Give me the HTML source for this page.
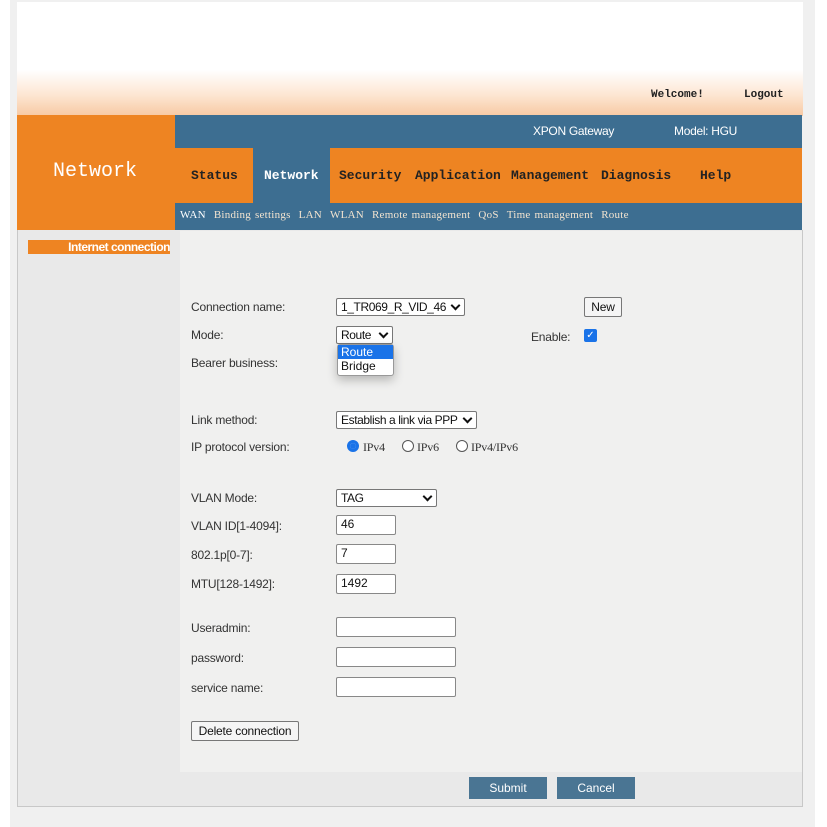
<!DOCTYPE html>
<html><head><style>
*{margin:0;padding:0;box-sizing:border-box}
body{width:827px;height:827px;background:#fff;position:relative;overflow:hidden;font-family:"Liberation Sans",sans-serif}
.a{position:absolute}
.mono{font-family:"Liberation Mono","DejaVu Sans Mono",monospace;font-weight:bold}
.lbl{position:absolute;left:191px;font-size:12px;color:#333;letter-spacing:-.2px}
.inp{position:absolute;background:#fff;border:1px solid #888;border-radius:2px;font-size:12px;color:#111;padding-left:4px;line-height:17px;height:20px}
.sel{position:absolute;background:#fff;border:1px solid #777;border-radius:2px;font-size:12px;color:#111;padding-left:4px;line-height:16px;height:18px;letter-spacing:-.4px;white-space:nowrap}
.sel:after{content:"";position:absolute;right:5px;top:3px;width:5px;height:5px;border-right:2px solid #111;border-bottom:2px solid #111;transform:rotate(45deg)}
.btn{position:absolute;background:#f5f5f5;border:1px solid #777;border-radius:2px;font-size:12px;color:#111;text-align:center;letter-spacing:-.2px}
.radio{position:absolute;width:12px;height:12px;border-radius:50%;border:1px solid #555;background:#fff}
</style></head><body>
<div class="a" style="left:10px;top:0;width:805px;height:827px;background:#f0f0f0"></div>
<div class="a" style="left:17px;top:2px;width:786px;height:114px;background:linear-gradient(#fff 0,#fff 68px,#fde6d2 93px,#f7c9a3 114px)"></div>
<div class="a mono" style="left:651px;top:89px;font-size:11px;color:#222">Welcome!</div>
<div class="a mono" style="left:744px;top:89px;font-size:11px;color:#222">Logout</div>
<div class="a" style="left:17px;top:115px;width:158px;height:115px;background:#ee8422"></div>
<div class="a" style="left:53px;top:160px;font-family:'Liberation Mono',monospace;font-size:20px;color:#fff">Network</div>
<div class="a" style="left:175px;top:115px;width:627px;height:33px;background:#3d6e91"></div>
<div class="a" style="left:533px;top:124px;font-size:12px;color:#fff;letter-spacing:-.3px">XPON Gateway</div>
<div class="a" style="left:674px;top:124px;font-size:12px;color:#fff;letter-spacing:-.3px">Model: HGU</div>
<div class="a" style="left:175px;top:148px;width:627px;height:55px;background:#ee8422"></div>
<div class="a" style="left:253px;top:148px;width:77px;height:55px;background:#3d6e91"></div>
<div class="a mono" style="top:168px;left:0;font-size:13px;color:#222;width:827px;height:20px">
<span class="a" style="left:191px">Status</span><span class="a" style="left:264px;color:#fff">Network</span><span class="a" style="left:339px">Security</span><span class="a" style="left:415px">Application</span><span class="a" style="left:511px">Management</span><span class="a" style="left:601px">Diagnosis</span><span class="a" style="left:700px">Help</span></div>
<div class="a" style="left:175px;top:203px;width:627px;height:27px;background:#3d6e91"></div>
<div class="a" style="left:180px;top:209px;font-family:'Liberation Serif',serif;font-size:11px;color:#fff;white-space:nowrap;letter-spacing:.25px;word-spacing:1px">WAN&nbsp; <span style="color:#f3e4d0">Binding settings &nbsp;LAN &nbsp;WLAN &nbsp;Remote management &nbsp;QoS &nbsp;Time management &nbsp;Route</span></div>
<div class="a" style="left:17px;top:230px;width:786px;height:577px;border:1px solid #c8c8c8;border-top:none;background:#e9e9e9"></div>
<div class="a" style="left:180px;top:231px;width:622px;height:541px;background:#f0f0ef"></div>
<div class="a" style="left:28px;top:240px;width:142px;height:14px;background:#ee8422;color:#fff;font-size:12px;font-weight:bold;text-align:right;line-height:14px;letter-spacing:-.5px;white-space:nowrap">Internet connection</div>

<div class="lbl" style="top:300px">Connection name:</div>
<div class="sel" style="left:336px;top:298px;width:129px">1_TR069_R_VID_46</div>
<div class="btn" style="left:584px;top:297px;width:38px;height:20px;line-height:18px">New</div>
<div class="lbl" style="top:328px">Mode:</div>
<div class="sel" style="left:336px;top:326px;width:57px">Route</div>
<div class="lbl" style="left:531px;top:330px">Enable:</div>
<div class="a" style="left:584px;top:329px;width:13px;height:13px;background:#1a73e8;border-radius:2px;color:#fff;font-size:10px;line-height:13px;text-align:center">✓</div>
<div class="lbl" style="top:356px">Bearer business:</div>
<div class="a" style="left:337px;top:344px;width:57px;height:32px;background:#fff;border:1px solid #999;border-radius:3px;box-shadow:0 4px 10px rgba(0,0,0,.25);font-size:12px;line-height:14px">
<div style="background:#1a73e8;color:#fff;padding-left:3px">Route</div><div style="padding-left:3px;color:#111">Bridge</div></div>
<div class="lbl" style="top:413px">Link method:</div>
<div class="sel" style="left:336px;top:411px;width:141px">Establish a link via PPP</div>
<div class="lbl" style="top:440px">IP protocol version:</div>
<div class="radio" style="left:347px;top:440px;border:3px solid #1a73e8;background:#fff"></div>
<div class="a" style="left:350px;top:443px;width:6px;height:6px;border-radius:50%;background:#1a73e8"></div>
<div class="lbl" style="left:363px;top:440px;font-family:'Liberation Serif',serif">IPv4</div>
<div class="radio" style="left:402px;top:440px"></div>
<div class="lbl" style="left:417px;top:440px;font-family:'Liberation Serif',serif">IPv6</div>
<div class="radio" style="left:456px;top:440px"></div>
<div class="lbl" style="left:471px;top:440px;font-family:'Liberation Serif',serif">IPv4/IPv6</div>

<div class="lbl" style="top:491px">VLAN Mode:</div>
<div class="sel" style="left:336px;top:489px;width:101px">TAG</div>
<div class="lbl" style="top:519px">VLAN ID[1-4094]:</div>
<div class="inp" style="left:336px;top:515px;width:60px">46</div>
<div class="lbl" style="top:548px">802.1p[0-7]:</div>
<div class="inp" style="left:336px;top:544px;width:60px">7</div>
<div class="lbl" style="top:577px">MTU[128-1492]:</div>
<div class="inp" style="left:336px;top:574px;width:60px">1492</div>
<div class="lbl" style="top:621px">Useradmin:</div>
<div class="inp" style="left:336px;top:617px;width:120px"></div>
<div class="lbl" style="top:651px">password:</div>
<div class="inp" style="left:336px;top:647px;width:120px"></div>
<div class="lbl" style="top:681px">service name:</div>
<div class="inp" style="left:336px;top:677px;width:120px"></div>
<div class="btn" style="left:191px;top:721px;width:108px;height:20px;line-height:18px">Delete connection</div>
<div class="a" style="left:469px;top:777px;width:78px;height:22px;background:#4a7593;color:#fff;font-size:12px;text-align:center;line-height:22px">Submit</div>
<div class="a" style="left:557px;top:777px;width:78px;height:22px;background:#4a7593;color:#fff;font-size:12px;text-align:center;line-height:22px">Cancel</div>
</body></html>
